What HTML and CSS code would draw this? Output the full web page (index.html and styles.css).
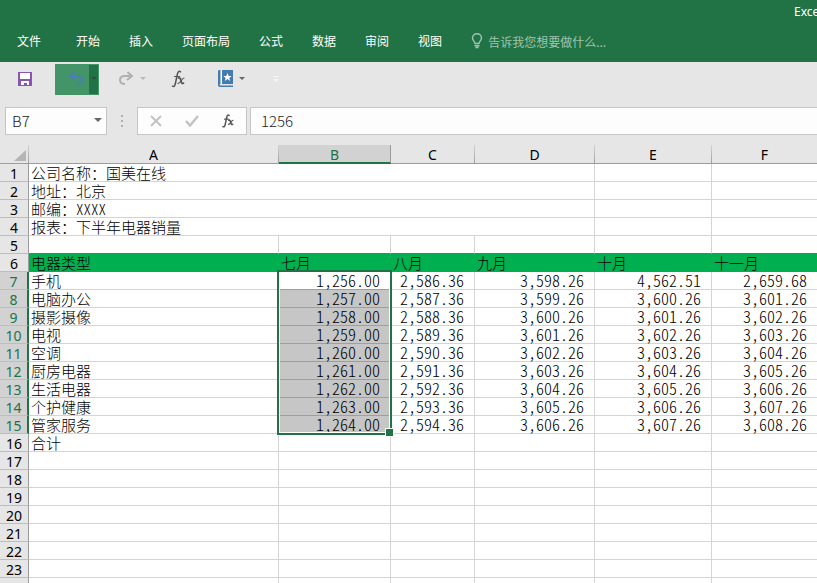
FILE: index.html
```html
<!DOCTYPE html>
<html lang="zh-CN">
<head>
  <meta charset="UTF-8" />
  <meta name="viewport" content="width=device-width, initial-scale=1" />
  <title>Excel</title>
  <link rel="stylesheet" href="styles.css">
</head>
<body>
  <div class="app">
    <header class="ribbon">
      <div class="titlebar"><span class="app-name">Excel</span></div>
      <nav class="tabs">
        <button type="button" class="tab file">文件</button>
        <button type="button" class="tab">开始</button>
        <button type="button" class="tab">插入</button>
        <button type="button" class="tab">页面布局</button>
        <button type="button" class="tab">公式</button>
        <button type="button" class="tab">数据</button>
        <button type="button" class="tab">审阅</button>
        <button type="button" class="tab">视图</button>
        <label class="tell-me">
          <svg width="12" height="16" viewBox="0 0 12 16" fill="none" stroke="currentColor" stroke-width="1.4"><path d="M4 10.5C4 8.5 1.5 7.600 1.500 5a4.500 4.200 0 0 1 9 0C10.500 7.600 8 8.500 8 10.500z"/><path d="M3.500 12.700h5M4.500 14.500h3"/></svg>
          <input type="text" placeholder="告诉我您想要做什么..." aria-label="告诉我您想要做什么" />
        </label>
      </nav>
    </header>

    <div class="quick-bar">
      <button type="button" class="tool save" title="保存">
        <svg width="14" height="14" viewBox="0 0 14 14"><path fill="#8a55ae" d="M0 0h14v14H0z"/><path fill="#fff" d="M2 1h10v6H2zM3 9h8v4H9v-2H6v2H3z"/></svg>
      </button>
      <div class="undo">
        <button type="button" class="tool undo-main" title="撤消">
          <svg width="16" height="15" viewBox="0 0 16 15" fill="none" stroke="#4a7fb5" stroke-width="2.200"><path d="M7 1 2 5l5 4M2.500 5h6.500c3 0 5 1.500 5 4s-1.500 4-5 4"/></svg>
        </button>
        <button type="button" class="tool undo-more" title="撤消列表"><span class="caret dark"></span></button>
      </div>
      <button type="button" class="tool redo" title="恢复">
        <svg width="16" height="15" viewBox="0 0 16 15" fill="none" stroke="#b1b1b1" stroke-width="2"><path d="M9.500 1 14 5 9 9M13.500 5H7C4 5 2 6.500 2 9s1.500 4 5 4"/></svg>
        <span class="caret pale"></span>
      </button>
      <button type="button" class="tool fx" title="插入函数">
        <svg width="16" height="18" viewBox="0 0 16 18" fill="none" stroke="#555" stroke-linecap="round"><path stroke-width="1.500" d="M9.500 1.800C7.800.5 6.800 2 6.300 4.500L4.500 13c-.5 2.800-1.500 4-3 3.200"/><path stroke-width="1.200" d="M3.500 6.500h5"/><path stroke-width="1.700" d="M7.500 8c2-.6 2 1.500 2.500 3s.8 3 2.500 2.200"/><path stroke-width="1.200" d="M13 8c-2-.2-3.500 5.800-6 5.400"/></svg>
      </button>
      <button type="button" class="tool book" title="收藏">
        <svg width="15" height="17" viewBox="0 0 15 17"><path fill="#457cb0" d="M1.500 0H15v14H1.800v1.500H15V17H2C.7 17 0 16.300 0 15V1.500C0 .6.600 0 1.500 0z"/><path fill="#fff" d="M2.500 0H4v14H2.500zM9.500 3l1.200 3h3l-2.400 1.900.9 3.100-2.700-1.900L6.800 11l.9-3.100L5.300 6h3z"/></svg>
        <span class="caret"></span>
      </button>
      <button type="button" class="tool customize" title="自定义">
        <svg width="6" height="6" viewBox="0 0 6 6" fill="#f5f5f5"><path d="M0 0h6v1H0zM0 3h6L3 6z"/></svg>
      </button>
    </div>

    <div class="formula-bar">
      <div class="box name-box">
        <input type="text" value="B7" aria-label="名称框" />
        <button type="button" class="tool" title="名称列表"><span class="caret big"></span></button>
      </div>
      <span class="grip"><i></i><i></i><i></i></span>
      <div class="box actions">
        <button type="button" class="tool" title="取消">
          <svg width="12" height="12" viewBox="0 0 12 12" fill="none" stroke="#c3c3c3" stroke-width="2"><path d="m1 1 10 10M11 1 1 11"/></svg>
        </button>
        <button type="button" class="tool" title="输入">
          <svg width="14" height="12" viewBox="0 0 14 12" fill="none" stroke="#c3c3c3" stroke-width="2.500"><path d="m1 6 4 4.500L13 1"/></svg>
        </button>
        <button type="button" class="tool" title="插入函数">
          <svg width="14" height="14" viewBox="0 0 16 18" fill="none" stroke="#555" stroke-linecap="round"><path stroke-width="1.900" d="M9.500 1.800C7.800.5 6.800 2 6.300 4.500L4.500 13c-.5 2.800-1.500 4-3 3.200"/><path stroke-width="1.500" d="M3.500 6.500h5"/><path stroke-width="2" d="M9 8c2-.6 2 1.500 2.500 3s.8 3 2.500 2.200"/><path stroke-width="1.500" d="M14.500 8c-2-.2-3.500 5.800-6 5.400"/></svg>
        </button>
      </div>
      <input type="text" class="box formula" value="1256" aria-label="编辑栏" />
    </div>

    <main class="sheet">
      <table class="grid">
        <colgroup>
          <col class="w-row"><col class="w-a"><col class="w-b"><col class="w-c"><col class="w-d"><col class="w-e"><col>
        </colgroup>
        <thead>
          <tr>
            <th class="corner"><svg width="12" height="11" viewBox="0 0 12 11"><path fill="#b5b5b5" d="M12 0v11H0z"/></svg></th>
            <th>A</th><th class="on">B</th><th>C</th><th>D</th><th>E</th><th>F</th>
          </tr>
        </thead>
        <tbody>
          <tr><th>1</th><td colspan="4">公司名称：国美在线</td><td></td><td></td></tr>
          <tr><th>2</th><td colspan="4">地址：北京</td><td></td><td></td></tr>
          <tr><th>3</th><td colspan="4">邮编：<span class="latin">XXXX</span></td><td></td><td></td></tr>
          <tr><th>4</th><td colspan="4">报表：下半年电器销量</td><td></td><td></td></tr>
          <tr class="above-head"><th>5</th><td></td><td></td><td></td><td></td><td></td><td></td></tr>
          <tr class="head"><th>6</th><td>电器类型</td><td>七月</td><td>八月</td><td>九月</td><td>十月</td><td>十一月</td></tr>
          <tr class="data"><th>7</th><td>手机</td><td class="active">1,256.00<div class="selection"></div></td><td>2,586.36</td><td>3,598.26</td><td>4,562.51</td><td>2,659.68</td></tr>
          <tr class="data"><th>8</th><td>电脑办公</td><td class="sel">1,257.00</td><td>2,587.36</td><td>3,599.26</td><td>3,600.26</td><td>3,601.26</td></tr>
          <tr class="data"><th>9</th><td>摄影摄像</td><td class="sel">1,258.00</td><td>2,588.36</td><td>3,600.26</td><td>3,601.26</td><td>3,602.26</td></tr>
          <tr class="data"><th>10</th><td>电视</td><td class="sel">1,259.00</td><td>2,589.36</td><td>3,601.26</td><td>3,602.26</td><td>3,603.26</td></tr>
          <tr class="data"><th>11</th><td>空调</td><td class="sel">1,260.00</td><td>2,590.36</td><td>3,602.26</td><td>3,603.26</td><td>3,604.26</td></tr>
          <tr class="data"><th>12</th><td>厨房电器</td><td class="sel">1,261.00</td><td>2,591.36</td><td>3,603.26</td><td>3,604.26</td><td>3,605.26</td></tr>
          <tr class="data"><th>13</th><td>生活电器</td><td class="sel">1,262.00</td><td>2,592.36</td><td>3,604.26</td><td>3,605.26</td><td>3,606.26</td></tr>
          <tr class="data"><th>14</th><td>个护健康</td><td class="sel">1,263.00</td><td>2,593.36</td><td>3,605.26</td><td>3,606.26</td><td>3,607.26</td></tr>
          <tr class="data"><th>15</th><td>管家服务</td><td class="sel">1,264.00</td><td>2,594.36</td><td>3,606.26</td><td>3,607.26</td><td>3,608.26</td></tr>
          <tr><th>16</th><td>合计</td><td></td><td></td><td></td><td></td><td></td></tr>
          <tr><th>17</th><td></td><td></td><td></td><td></td><td></td><td></td></tr>
          <tr><th>18</th><td></td><td></td><td></td><td></td><td></td><td></td></tr>
          <tr><th>19</th><td></td><td></td><td></td><td></td><td></td><td></td></tr>
          <tr><th>20</th><td></td><td></td><td></td><td></td><td></td><td></td></tr>
          <tr><th>21</th><td></td><td></td><td></td><td></td><td></td><td></td></tr>
          <tr><th>22</th><td></td><td></td><td></td><td></td><td></td><td></td></tr>
          <tr><th>23</th><td></td><td></td><td></td><td></td><td></td><td></td></tr>
          <tr><th></th><td></td><td></td><td></td><td></td><td></td><td></td></tr>
        </tbody>
      </table>
    </main>
  </div>
</body>
</html>
```
FILE: styles.css
```css
* {
  box-sizing: border-box;
}
body, html {
  height: 100%;
  margin: 0;
  padding: 0;
}
body {
  font-family: "Noto Sans", "Noto Sans CJK SC", sans-serif;
  font-size: 12px;
  color: #000;
  background: #fff;
}
button, input {
  font-family: inherit;
  font-size: inherit;
  font-weight: inherit;
  color: inherit;
  background: none;
  border: none;
  outline: none;
  margin: 0;
  padding: 0;
}
button {
  cursor: pointer;
}
svg {
  display: block;
}
.app {
  height: 100vh;
  display: flex;
  flex-direction: column;
  overflow: hidden;
  background: #e6e6e6;
}

/* Ribbon */
.ribbon {
  background: #217346;
  color: #fff;
  height: 62px;
  flex: none;
}
.titlebar {
  display: flex;
  justify-content: flex-end;
  height: 24px;
  line-height: 24px;
}
.app-name {
  width: 23px;
  overflow: hidden;
}
.tabs {
  display: flex;
  align-items: center;
  height: 32px;
  padding-left: 17px;
  gap: 29px;
  font-family: "Noto Sans CJK SC", sans-serif;
}
.tab {
  white-space: nowrap;
}
.tab.file {
  margin-right: 6px;
}
.tell-me {
  display: flex;
  align-items: center;
  gap: 5px;
  flex: 1;
  padding-top: 2px;
  color: #a0c4af;
}
.tell-me input {
  flex: 1;
  min-width: 0;
}
.tell-me input::placeholder {
  color: #a0c4af;
  opacity: 1;
}

/* Quick access toolbar */
.quick-bar {
  display: flex;
  align-items: center;
  height: 35px;
  flex: none;
  padding: 0 0 2px 18px;
}
.tool {
  display: flex;
  align-items: center;
  justify-content: center;
}
.undo {
  display: flex;
  height: 31px;
  margin: 2px 19px 0 23px;
  border: 1px solid #439467;
}
.undo-main {
  width: 33px;
  padding: 0 0 2px 6px;
  background: #439467;
}
.undo-more {
  width: 9px;
  padding-bottom: 2px;
  background: #217346;
}
.redo, .book {
  gap: 6px;
}
.fx {
  margin: 0 31px 0 25px;
}
.customize {
  margin-left: 28px;
}
.caret {
  border: 3px solid transparent;
  border-top-color: #666;
  border-bottom: none;
}
.caret.dark {
  border-top-color: #444;
}
.caret.pale {
  border-top-color: #b8b8b8;
}
.caret.big {
  border-width: 4px 4px 0;
}

/* Formula bar */
.formula-bar {
  display: flex;
  height: 48px;
  flex: none;
  padding: 10px 0 10px 5px;
  font-family: "Noto Sans CJK SC", sans-serif;
  font-size: 15px;
  font-weight: 300;
  color: #222;
}
.box {
  display: flex;
  background: #fdfdfd;
  border: 1px solid #c6c6c6;
}
.name-box {
  width: 102px;
  padding: 0 4px 2px 6px;
}
.name-box input {
  flex: 1;
  min-width: 0;
}
.grip {
  display: flex;
  flex-direction: column;
  align-items: center;
  justify-content: center;
  gap: 3px;
  width: 30px;
}
.grip i {
  width: 2px;
  height: 2px;
  background: #b0b0b0;
}
.actions {
  width: 110px;
  margin-right: 3px;
}
.actions .tool {
  flex: 1;
}
.formula {
  flex: 1;
  min-width: 0;
  padding: 0 0 2px 10px;
  border-right: none;
}

/* Worksheet */
.sheet {
  flex: 1;
  min-height: 0;
  overflow: hidden;
  background: #fff;
}
.grid {
  width: 100%;
  table-layout: fixed;
  border-collapse: separate;
  border-spacing: 0;
}
.w-row { width: 29px; }
.w-a { width: 250px; }
.w-b { width: 112px; }
.w-c { width: 84px; }
.w-d { width: 120px; }
.w-e { width: 117px; }
.grid th {
  height: 18px;
  padding: 2px 0 0;
  font-size: 14px;
  font-weight: 400;
  line-height: 15px;
  background: #e6e6e6;
  border-right: 1px solid #9b9b9b;
  border-bottom: 1px solid #bdbdbd;
}
.grid thead th {
  height: 19px;
  line-height: 16px;
  border-right: 1px solid;
  border-image: linear-gradient(#d6d6d6, #9b9b9b) 1;
  border-bottom: 1px solid #9b9b9b;
}
.grid thead th:last-child {
  border-right-width: 0;
}
.grid thead .on {
  color: #217346;
  line-height: 15px;
  background: #d2d2d2;
  border-image: none;
  border-right-color: #9b9b9b;
  border-bottom: 2px solid #217346;
}
.grid .corner svg {
  margin-left: 14px;
}
.grid td {
  height: 18px;
  padding: 0 0 0 2px;
  font-family: "Noto Sans CJK SC", sans-serif;
  font-size: 15px;
  font-weight: 300;
  line-height: 17px;
  white-space: nowrap;
  border-right: 1px solid #d4d4d4;
  border-bottom: 1px solid #d4d4d4;
}
.grid td:last-child {
  border-right: none;
}
.latin {
  font-feature-settings: "hwid";
}
.above-head td {
  border-bottom-color: #00b050;
}
.head td {
  background: #00b050;
  border-color: #00b050;
}
.grid .data th {
  color: #217346;
  background: #d2d2d2;
  border-right: 2px solid #217346;
}
.data td:nth-child(n+3) {
  padding: 0 10px 0 0;
  font-size: 16px;
  font-feature-settings: "hwid";
  text-align: right;
}
.data .sel {
  background: #c6c6c6;
  border-bottom-color: #9e9e9e;
}
.data .active {
  position: relative;
  border-bottom-color: #9e9e9e;
}

/* Outline over the nine selected rows, with the fill handle */
.selection {
  position: absolute;
  top: -2px;
  left: -2px;
  right: -2px;
  height: 165px;
  border: 2px solid #217346;
  box-shadow: inset 0 0 0 1px #fff;
}
.selection::after {
  content: "";
  position: absolute;
  right: -4px;
  bottom: -4px;
  width: 7px;
  height: 7px;
  background: #217346;
  border: 1px solid #fff;
}
```
